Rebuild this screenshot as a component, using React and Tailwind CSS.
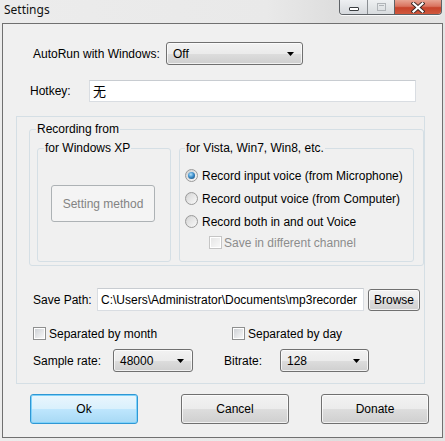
import React from "react";

const btnBg =
  "bg-[linear-gradient(to_bottom,#f2f2f2_0%,#ebebeb_50%,#dddddd_51%,#cfcfcf_100%)]";

function Caret() {
  return (
    <svg width="7" height="4" viewBox="0 0 7 4" className="shrink-0">
      <path d="M0 0 H7 L3.5 4 Z" fill="#000" />
    </svg>
  );
}

function Select({ value, w }) {
  return (
    <div
      className={`h-[23px] ${w} flex items-center pl-[6px] pr-[8px] border border-[#707070] rounded-[3px] ${btnBg} shadow-[inset_0_0_0_1px_rgba(255,255,255,0.7)]`}
    >
      <span className="flex-1 leading-[14px]">{value}</span>
      <Caret />
    </div>
  );
}

function Radio({ checked }) {
  return (
    <span className="w-[13px] h-[13px] rounded-full border border-[#9a9a9a] bg-[linear-gradient(135deg,#cfcfcf,#fafafa)] flex items-center justify-center shrink-0">
      {checked ? (
        <span className="w-[7px] h-[7px] rounded-full bg-[radial-gradient(circle_at_40%_35%,#b5e3fb_0%,#3d8fcc_45%,#123f66_100%)]" />
      ) : (
        <span className="w-[9px] h-[9px] rounded-full bg-[linear-gradient(135deg,#d8d8d8,#f6f6f6)]" />
      )}
    </span>
  );
}

function Check({ disabled }) {
  return (
    <span
      className={`w-[13px] h-[13px] border ${
        disabled ? "border-[#c5c5c5]" : "border-[#8e8f8f]"
      } bg-white p-[1px] shrink-0 flex`}
    >
      <span
        className={`flex-1 ${
          disabled
            ? "bg-[linear-gradient(135deg,#e6e6e6,#f8f8f8)]"
            : "bg-[linear-gradient(135deg,#cfd2d6,#f7f7f7)]"
        }`}
      />
    </span>
  );
}

function Group({ title, className, children, tx }) {
  return (
    <div
      className={`relative border border-[#d5dfe5] rounded-[3px] ${className}`}
    >
      <span
        className={`absolute -top-[8px] ${tx} bg-[#f0f0f0] px-[1px] leading-[14px] whitespace-nowrap`}
      >
        {title}
      </span>
      {children}
    </div>
  );
}

export default function App() {
  return (
    <div className="w-[445px] h-[441px] overflow-hidden flex flex-col bg-[linear-gradient(to_right,#ececec_0%,#e9e9e9_60%,#dedede_75%,#e4e4e4_100%)] font-['Liberation_Sans',Arial,sans-serif] text-[12px] text-black">
      {/* Title bar */}
      <div className="h-[23px] flex items-start shrink-0">
        <span className="pl-[4px] pt-[2px] font-['Noto_Sans',sans-serif] text-[12px] leading-[16px] text-[#111]">
          Settings
        </span>
        <div className="ml-auto mr-[3px] flex h-[15px] rounded-b-[4px] border border-t-0 border-[#5e6266] overflow-hidden shadow-[0_1px_0_rgba(255,255,255,0.8)]">
          <div className="w-[28px] flex items-center justify-center pt-[3px] bg-[linear-gradient(to_bottom,#eef0f2,#d5d8dc)] border-r border-[#8a8e92]">
            <span className="w-[10px] h-[4px] bg-white border border-[#3a3d40] rounded-[1px]" />
          </div>
          <div className="w-[27px] flex items-center justify-center bg-[linear-gradient(to_bottom,#eef0f2,#d8dbde)] border-r border-[#5e6266]">
            <span className="w-[9px] h-[8px] border border-[#b0b4b8] flex p-[1px]">
              <span className="flex-1 border-t border-[#b0b4b8]" />
            </span>
          </div>
          <div className="w-[46px] flex items-center justify-center bg-[linear-gradient(to_bottom,#e8a493_0%,#d9735f_45%,#c7432b_55%,#d0583d_100%)]">
            <svg width="14" height="11" viewBox="0 0 14 11">
              <path
                d="M2.5 1.5 L11.5 9.5 M11.5 1.5 L2.5 9.5"
                stroke="#3c2a26"
                strokeWidth="4"
                strokeLinecap="square"
              />
              <path
                d="M2.5 1.5 L11.5 9.5 M11.5 1.5 L2.5 9.5"
                stroke="#ffffff"
                strokeWidth="2.2"
                strokeLinecap="square"
              />
            </svg>
          </div>
        </div>
      </div>

      {/* Client area */}
      <div className="ml-[2px] w-[441px] h-[415px] border border-[#707070] bg-[#f0f0f0] flex flex-col shrink-0">
        {/* AutoRun row */}
        <div className="mt-[18px] ml-[30px] flex items-center h-[23px]">
          <span className="w-[133px] leading-[14px]">AutoRun with Windows:</span>
          <Select value="Off" w="w-[137px]" />
        </div>

        {/* Hotkey row */}
        <div className="mt-[15px] ml-[27px] flex items-center h-[22px]">
          <span className="w-[59px] leading-[14px]">Hotkey:</span>
          <div className="w-[327px] h-[22px] bg-white border border-[#d9dde2] border-t-[#c8ccd1] flex items-center pl-[3px] font-['Noto_Sans_CJK_SC','Liberation_Sans',sans-serif] text-[13px]">
            无
          </div>
        </div>

        {/* Main panel */}
        <div className="mt-[14px] ml-[13px] w-[409px] h-[268px] border border-[#d5dfe5] flex flex-col">
          <Group
            title="Recording from"
            tx="left-[6px]"
            className="mt-[12px] ml-[12px] w-[395px] h-[137px] flex pt-[18px] pl-[7px] gap-[8px]"
          >
            <Group
              title="for Windows XP"
              tx="left-[6px]"
              className="w-[134px] h-[114px] pt-[36px] pl-[13px]"
            >
              <div className="w-[104px] h-[37px] border border-[#adb2b5] rounded-[3px] bg-[#f4f4f4] flex items-center justify-center text-[#838383]">
                Setting method
              </div>
            </Group>
            <Group
              title="for Vista, Win7, Win8, etc."
              tx="left-[5px]"
              className="w-[235px] h-[114px] pt-[15px] flex flex-col"
            >
              <div className="h-[23px] flex items-center pl-[5px] gap-[4px]">
                <Radio checked />
                <span>Record input voice (from Microphone)</span>
              </div>
              <div className="h-[23px] flex items-center pl-[5px] gap-[4px]">
                <Radio />
                <span>Record output voice (from Computer)</span>
              </div>
              <div className="h-[23px] flex items-center pl-[5px] gap-[4px]">
                <Radio />
                <span>Record both in and out Voice</span>
              </div>
              <div className="h-[19px] flex items-center pl-[29px] gap-[2px]">
                <Check disabled />
                <span className="text-[#8c8c8c]">Save in different channel</span>
              </div>
            </Group>
          </Group>

          {/* Save path */}
          <div className="mt-[22px] ml-[16px] flex items-center h-[23px]">
            <span className="w-[64px] leading-[14px]">Save Path:</span>
            <div className="w-[267px] h-[23px] bg-white border border-[#d9dde2] border-t-[#c8ccd1] flex items-center pl-[3px] whitespace-nowrap overflow-hidden">
              C:\Users\Administrator\Documents\mp3recorder
            </div>
            <div
              className={`ml-[4px] w-[52px] h-[22px] border border-[#707070] rounded-[3px] ${btnBg} shadow-[inset_0_0_0_1px_rgba(255,255,255,0.7)] flex items-center justify-center`}
            >
              Browse
            </div>
          </div>

          {/* Checkboxes */}
          <div className="mt-[16px] ml-[16px] flex items-center h-[13px]">
            <div className="w-[199px] flex items-center gap-[3px]">
              <Check />
              <span>Separated by month</span>
            </div>
            <div className="flex items-center gap-[3px]">
              <Check />
              <span>Separated by day</span>
            </div>
          </div>

          {/* Sample rate / Bitrate */}
          <div className="mt-[9px] ml-[16px] flex items-center h-[23px]">
            <span className="w-[80px] leading-[14px]">Sample rate:</span>
            <Select value="48000" w="w-[80px]" />
            <span className="ml-[31px] w-[56px] leading-[14px]">Bitrate:</span>
            <Select value="128" w="w-[89px]" />
          </div>
        </div>

        {/* Bottom buttons */}
        <div className="mt-[10px] ml-[27px] flex h-[30px]">
          <div className="w-[108px] h-[30px] rounded-[3px] border border-[#2f97d4] shadow-[inset_0_0_0_1px_#7fd2fa] bg-[linear-gradient(to_bottom,#eaf6fd_0%,#d9f0fc_50%,#bee6fd_51%,#a7d9f5_100%)] flex items-center justify-center">
            Ok
          </div>
          <div
            className={`ml-[43px] w-[108px] h-[30px] rounded-[3px] border border-[#707070] ${btnBg} shadow-[inset_0_0_0_1px_rgba(255,255,255,0.7)] flex items-center justify-center`}
          >
            Cancel
          </div>
          <div
            className={`ml-[32px] w-[108px] h-[30px] rounded-[3px] border border-[#707070] ${btnBg} shadow-[inset_0_0_0_1px_rgba(255,255,255,0.7)] flex items-center justify-center`}
          >
            Donate
          </div>
        </div>
      </div>
    </div>
  );
}
